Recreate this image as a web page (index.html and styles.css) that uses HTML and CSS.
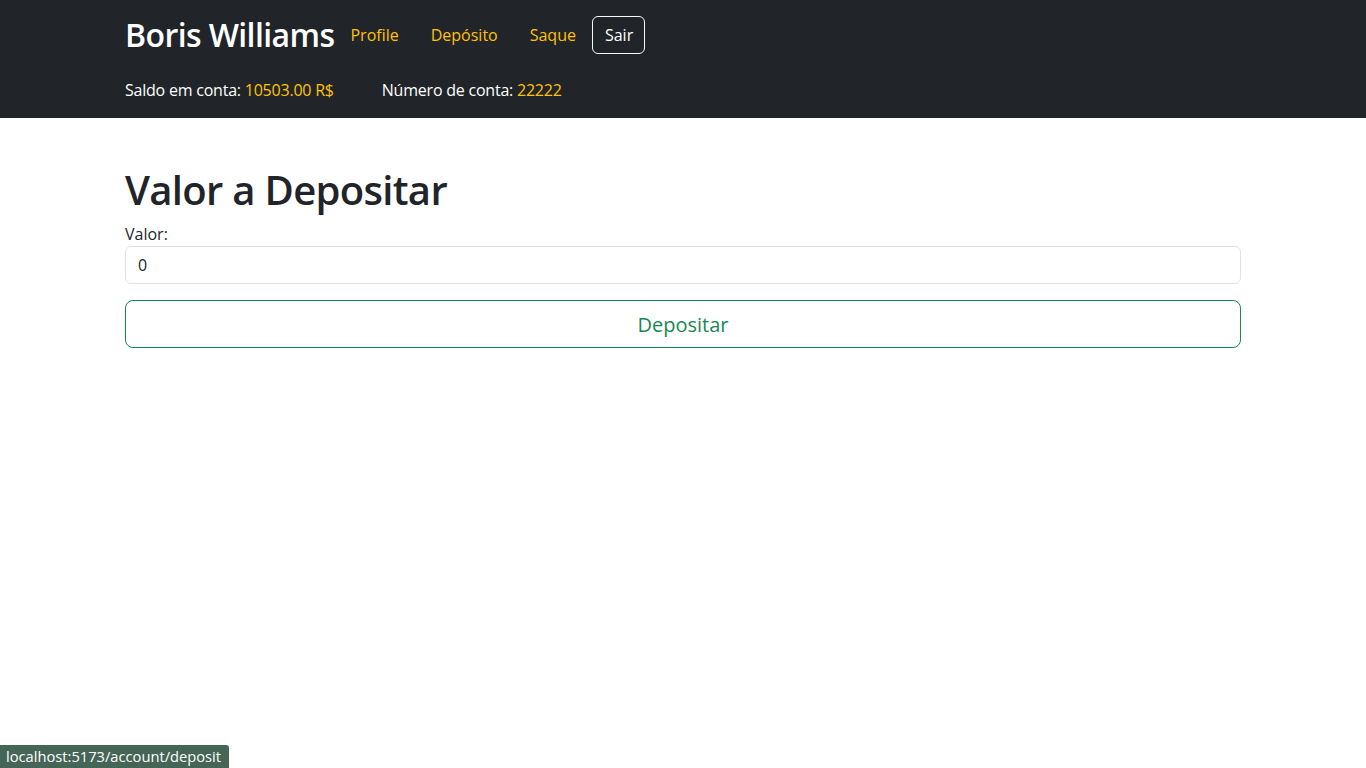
FILE: index.html
```html
<!DOCTYPE html>
<html lang="pt">
<head>
<meta charset="utf-8">
<title>Depósito</title>
<link rel="stylesheet" href="styles.css">
</head>
<body>
<header class="navbar">
  <div class="container">
    <div class="nav-row">
      <h2 class="brand">Boris Williams</h2>
      <nav class="nav-links">
        <a class="nav-link" href="#">Profile</a>
        <a class="nav-link" href="#">Depósito</a>
        <a class="nav-link" href="#">Saque</a>
      </nav>
      <button class="btn-logout" type="button">Sair</button>
    </div>
    <div class="info-row">
      <span class="info">Saldo em conta: <span class="accent">10503.00 R$</span></span>
      <span class="info">Número de conta: <span class="accent">22222</span></span>
    </div>
  </div>
</header>
<main class="container main">
  <h1 class="title">Valor a Depositar</h1>
  <form class="form">
    <label class="label" for="valor">Valor:</label>
    <input class="input" id="valor" type="number" value="0">
    <button class="btn-deposit" type="button">Depositar</button>
  </form>
</main>
<div class="status">localhost:5173/account/deposit</div>
</body>
</html>
```

FILE: styles.css
```css
* { box-sizing: border-box; }
html, body {
  margin: 0;
  padding: 0;
  background: #fff;
  color: #212529;
  font-family: "Open Sans", "Noto Sans", sans-serif;
  font-size: 16px;
  line-height: 1.5;
}
.container {
  width: 1140px;
  margin: 0 auto;
  padding: 0 12px;
}
.navbar {
  background: #212529;
  padding: 16px 0;
  color: #fff;
}
.nav-row {
  display: flex;
  align-items: center;
  height: 38px;
}
.brand {
  margin: 0;
  font-size: 32px;
  font-weight: 600;
  line-height: 1.2;
  color: #fff;
  letter-spacing: -0.6px;
}
.nav-links {
  display: flex;
  margin-left: 0;
}
.nav-link {
  color: #ffc107;
  text-decoration: none;
  padding: 8px 16px;
}
.btn-logout {
  margin-left: 0;
  height: 38px;
  padding: 0 11px 0 12px;
  background: transparent;
  color: #fff;
  border: 1px solid #f8f9fa;
  border-radius: 6px;
  font-family: inherit;
  font-size: 16px;
}
.info-row {
  display: flex;
  gap: 48px;
  margin-top: 24px;
  height: 24px;
  letter-spacing: -0.22px;
}
.accent { color: #ffc107; }
.main { padding-top: 48px; }
.title {
  margin: 0 0 8px;
  font-size: 40px;
  font-weight: 600;
  line-height: 1.2;
  letter-spacing: -0.68px;
}
.form {
  display: flex;
  flex-direction: column;
}
.label {
  line-height: 24px;
}
.input {
  height: 38px;
  padding: 6px 12px;
  border: 1px solid #dee2e6;
  border-radius: 6px;
  font-family: inherit;
  font-size: 16px;
  color: #212529;
}
.btn-deposit {
  margin-top: 16px;
  height: 48px;
  background: #fff;
  color: #198754;
  border: 1px solid #198754;
  border-radius: 8px;
  font-family: inherit;
  font-size: 20px;
}
.status {
  position: fixed;
  left: 0;
  bottom: 0;
  width: 229px;
  height: 23px;
  padding: 0 6px;
  background: #456556;
  color: #fff;
  font-size: 14.7px;
  line-height: 23px;
  border-top-right-radius: 3px;
  white-space: nowrap;
  overflow: hidden;
}
```
